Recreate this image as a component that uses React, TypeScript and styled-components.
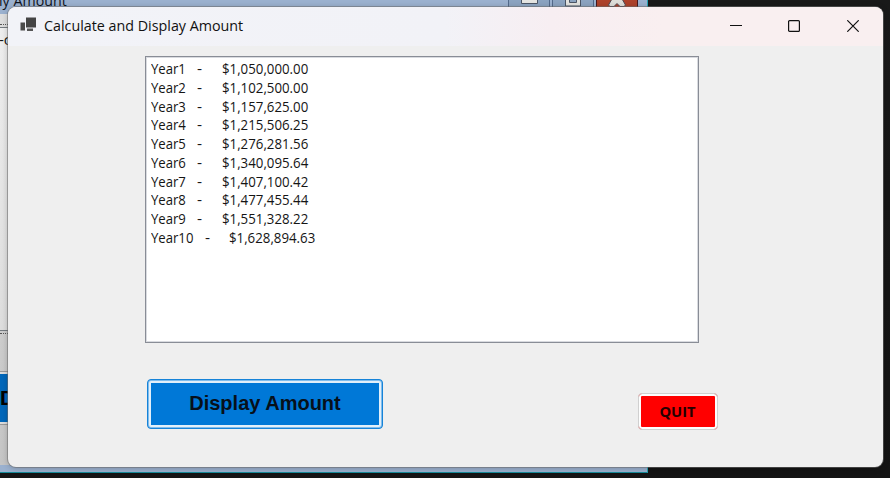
import React from "react";
import styled, { createGlobalStyle } from "styled-components";

const GlobalStyle = createGlobalStyle`
  * { box-sizing: border-box; }
  body { margin: 0; background: #161616; overflow: hidden; }
`;

const Desktop = styled.div`
  position: relative;
  width: 890px;
  height: 478px;
  overflow: hidden;
  background: linear-gradient(#191919, #141414);
`;

const BackWindow = styled.div`
  position: absolute;
  left: 0;
  top: 0;
  width: 648px;
  height: 473px;
  display: flex;
  flex-direction: column;
  background: #9bb1cf;
  border-right: 1px solid #28a7b8;
  border-bottom: 1px solid #168b99;
  overflow: hidden;
`;

const BackTitle = styled.div`
  display: flex;
  justify-content: space-between;
  height: 14px;
  font: 15px/20px "Open Sans", sans-serif;
  color: #10141c;
  white-space: nowrap;
`;

const BackTitleText = styled.span`
  display: block;
  margin-top: -10px;
  margin-left: -1px;
  transform: scaleX(0.95);
  transform-origin: left;
`;

const BackControls = styled.div`
  display: flex;
  gap: 2px;
  margin-right: 9px;
`;

const BackControl = styled.div<{ $danger?: boolean }>`
  display: flex;
  justify-content: center;
  width: 42px;
  height: 8px;
  background: ${(p) => (p.$danger ? "#ad422b" : "#8ba3c0")};
  border: solid ${(p) => (p.$danger ? "#47191e" : "#536a8b")};
  border-width: 0 1px;
`;

const BackBody = styled.div`
  height: 451px;
  display: flex;
  flex-direction: column;
  width: 640px;
  background: linear-gradient(#dedede, #c5c5c5);
`;

const BackDots = styled.div`
  margin-top: 10px;
  border-top: 1px dotted #555;
`;

const BackList = styled.div`
  margin-top: 2px;
  height: 304px;
  background: linear-gradient(#eeeeee, #dddddd);
  border: solid #757b80;
  border-width: 1px 0;
  font: 15px/20px "Open Sans", sans-serif;
  padding-top: 1px;
  color: #151515;
  text-indent: -1px;
`;

const BackDotsLow = styled.div`
  margin-top: 2px;
  border-top: 1px dotted #555;
`;

const BackButton = styled.div`
  margin-top: 37px;
  height: 54px;
  border: solid #999;
  border-width: 1px 0;
  padding: 2px 0;
  background: #dcdcdc;
  font: bold 21px/48px "Liberation Sans", Arial, sans-serif;
`;

const BackButtonFace = styled.div`
  height: 48px;
  background: #0067ba;
`;

const Window = styled.main`
  position: absolute;
  left: 8px;
  top: 7px;
  width: 875px;
  height: 460px;
  border-radius: 8px;
  overflow: hidden;
  background: #efefef;
  box-shadow: 0 0 0 1px rgba(110, 110, 110, 0.55), 0 1px 6px rgba(0, 0, 0, 0.25);
`;

const TitleBar = styled.header`
  height: 39px;
  display: flex;
  align-items: flex-start;
  background: linear-gradient(90deg, #f2f3f8 0%, #f2f2f7 50%, #f7eef2 62%, #f9eff0 75%);
`;

const AppIcon = styled.svg`
  display: block;
  width: 16px;
  height: 16px;
  margin: 10px 8px 0 12px;
`;

const Title = styled.h1`
  margin: 8px 0 0;
  width: 200px;
  font: 15px/20px "Open Sans", "Noto Sans", sans-serif;
  color: #111;
  white-space: nowrap;
  transform: scaleX(0.953);
  transform-origin: left;
`;

const Controls = styled.div`
  display: flex;
  margin-left: auto;
  margin-right: 1px;
`;

const Control = styled.button`
  display: flex;
  align-items: center;
  justify-content: center;
  width: 58.5px;
  height: 38px;
  padding: 0;
  border: 0;
  background: none;
`;

const Content = styled.section`
  display: flex;
  flex-direction: column;
  padding: 10px 165px 0 137px;
`;

const List = styled.ul`
  margin: 0;
  padding: 2px 0 0 5px;
  width: 554px;
  height: 287px;
  list-style: none;
  background: #fff;
  border: 1px solid #898d96;
  box-shadow: inset 0 0 0 1px #d9dbe0;
  color: #151515;
  font: 15px/18.78px "Open Sans", "Noto Sans", sans-serif;
`;

const Row = styled.li<{ $wide: boolean }>`
  display: grid;
  grid-template-columns: ${(p) => (p.$wide ? "53.5px 24.5px" : "46px 25px")} 100px;
  height: 18.78px;
  white-space: nowrap;
`;

const Cell = styled.span<{ $scale: number }>`
  transform: scaleX(${(p) => p.$scale});
  transform-origin: left;
`;

const Actions = styled.div`
  display: flex;
  align-items: flex-start;
  width: 573px;
  margin-top: 36px;
  padding-left: 2px;
`;

const DisplayButton = styled.button`
  width: 236px;
  height: 50px;
  padding: 0 0 2px;
  border: 1px solid #1683d8;
  border-radius: 4px;
  background: #0078d7;
  box-shadow: inset 0 0 0 1px #7fbced, inset 0 0 0 3px #e1effa;
  color: #07101a;
  font: bold 20px/46px "Liberation Sans", Arial, sans-serif;
`;

const QuitButton = styled.button`
  width: 80px;
  height: 37px;
  margin: 14px 0 0 auto;
  padding: 0 1px 2px 0;
  border: 1px solid #d0d0d0;
  border-radius: 4px;
  background: #f00;
  box-shadow: inset 0 0 0 2px #fdfdfd;
  color: #240000;
  font: bold 15px/32px "Open Sans", "Noto Sans", sans-serif;
`;

const QuitLabel = styled.span`
  display: block;
  transform: scaleX(0.98);
`;

const entries: [number, string][] = [
  [1, "$1,050,000.00"],
  [2, "$1,102,500.00"],
  [3, "$1,157,625.00"],
  [4, "$1,215,506.25"],
  [5, "$1,276,281.56"],
  [6, "$1,340,095.64"],
  [7, "$1,407,100.42"],
  [8, "$1,477,455.44"],
  [9, "$1,551,328.22"],
  [10, "$1,628,894.63"],
];

export default function App() {
  return (
    <>
      <GlobalStyle />
      <Desktop>
        <BackWindow>
          <BackTitle>
            <BackTitleText>ly Amount</BackTitleText>
            <BackControls>
              <BackControl>
                <svg width="20" height="8">
                  <path d="M2.5-2v5.5h16V-2" fill="#e5e5e2" stroke="#4b5565" />
                </svg>
              </BackControl>
              <BackControl>
                <svg width="18" height="8">
                  <path d="M1.5-2v8h15v-8z" fill="#e2e2df" stroke="#4b5565" />
                  <path d="M5.5-2v4.5h7V-2" fill="#8ba3c0" stroke="#4b5565" />
                </svg>
              </BackControl>
              <BackControl $danger>
                <svg width="20" height="8">
                  <path d="M5.5-2 1.5 5 3 6.5h4L10 3.5l3 3h4L18.500 5 14.500-2z" fill="#deded9" stroke="#4e4953" />
                </svg>
              </BackControl>
            </BackControls>
          </BackTitle>
          <BackBody>
            <BackDots />
            <BackList>-c</BackList>
            <BackDotsLow />
            <BackButton>
              <BackButtonFace>D</BackButtonFace>
            </BackButton>
          </BackBody>
        </BackWindow>
        <Window>
          <TitleBar>
            <AppIcon viewBox="0 0 16 16">
              <path d="M6 0.500h10v10H6z" fill="#444" />
              <path d="M0.500 5.500H5v8H0.500z" fill="#4a4a4a" />
              <path d="M7 11.500h6v2.500H7z" fill="#555" />
            </AppIcon>
            <Title>Calculate and Display Amount</Title>
            <Controls>
              <Control aria-label="Minimize">
                <svg width="12" height="12">
                  <path d="M0 5.5h12" stroke="#111" />
                </svg>
              </Control>
              <Control aria-label="Maximize">
                <svg width="12" height="12">
                  <rect x="0.6" y="0.6" width="10.8" height="10.8" rx="1" fill="none" stroke="#111" strokeWidth="1.2" />
                </svg>
              </Control>
              <Control aria-label="Close">
                <svg width="12" height="12">
                  <path d="M0.300 0.300l11.400 11.400M11.700 0.300L0.300 11.700" stroke="#111" strokeWidth="1.200" />
                </svg>
              </Control>
            </Controls>
          </TitleBar>
          <Content>
            <List>
              {entries.map(([year, amount]) => (
                <Row key={year} $wide={year > 9}>
                  <Cell $scale={0.875}>Year{year}</Cell>
                  <Cell $scale={1.05}>-</Cell>
                  <Cell $scale={0.885}>{amount}</Cell>
                </Row>
              ))}
            </List>
            <Actions>
              <DisplayButton>Display Amount</DisplayButton>
              <QuitButton>
                <QuitLabel>QUIT</QuitLabel>
              </QuitButton>
            </Actions>
          </Content>
        </Window>
      </Desktop>
    </>
  );
}
